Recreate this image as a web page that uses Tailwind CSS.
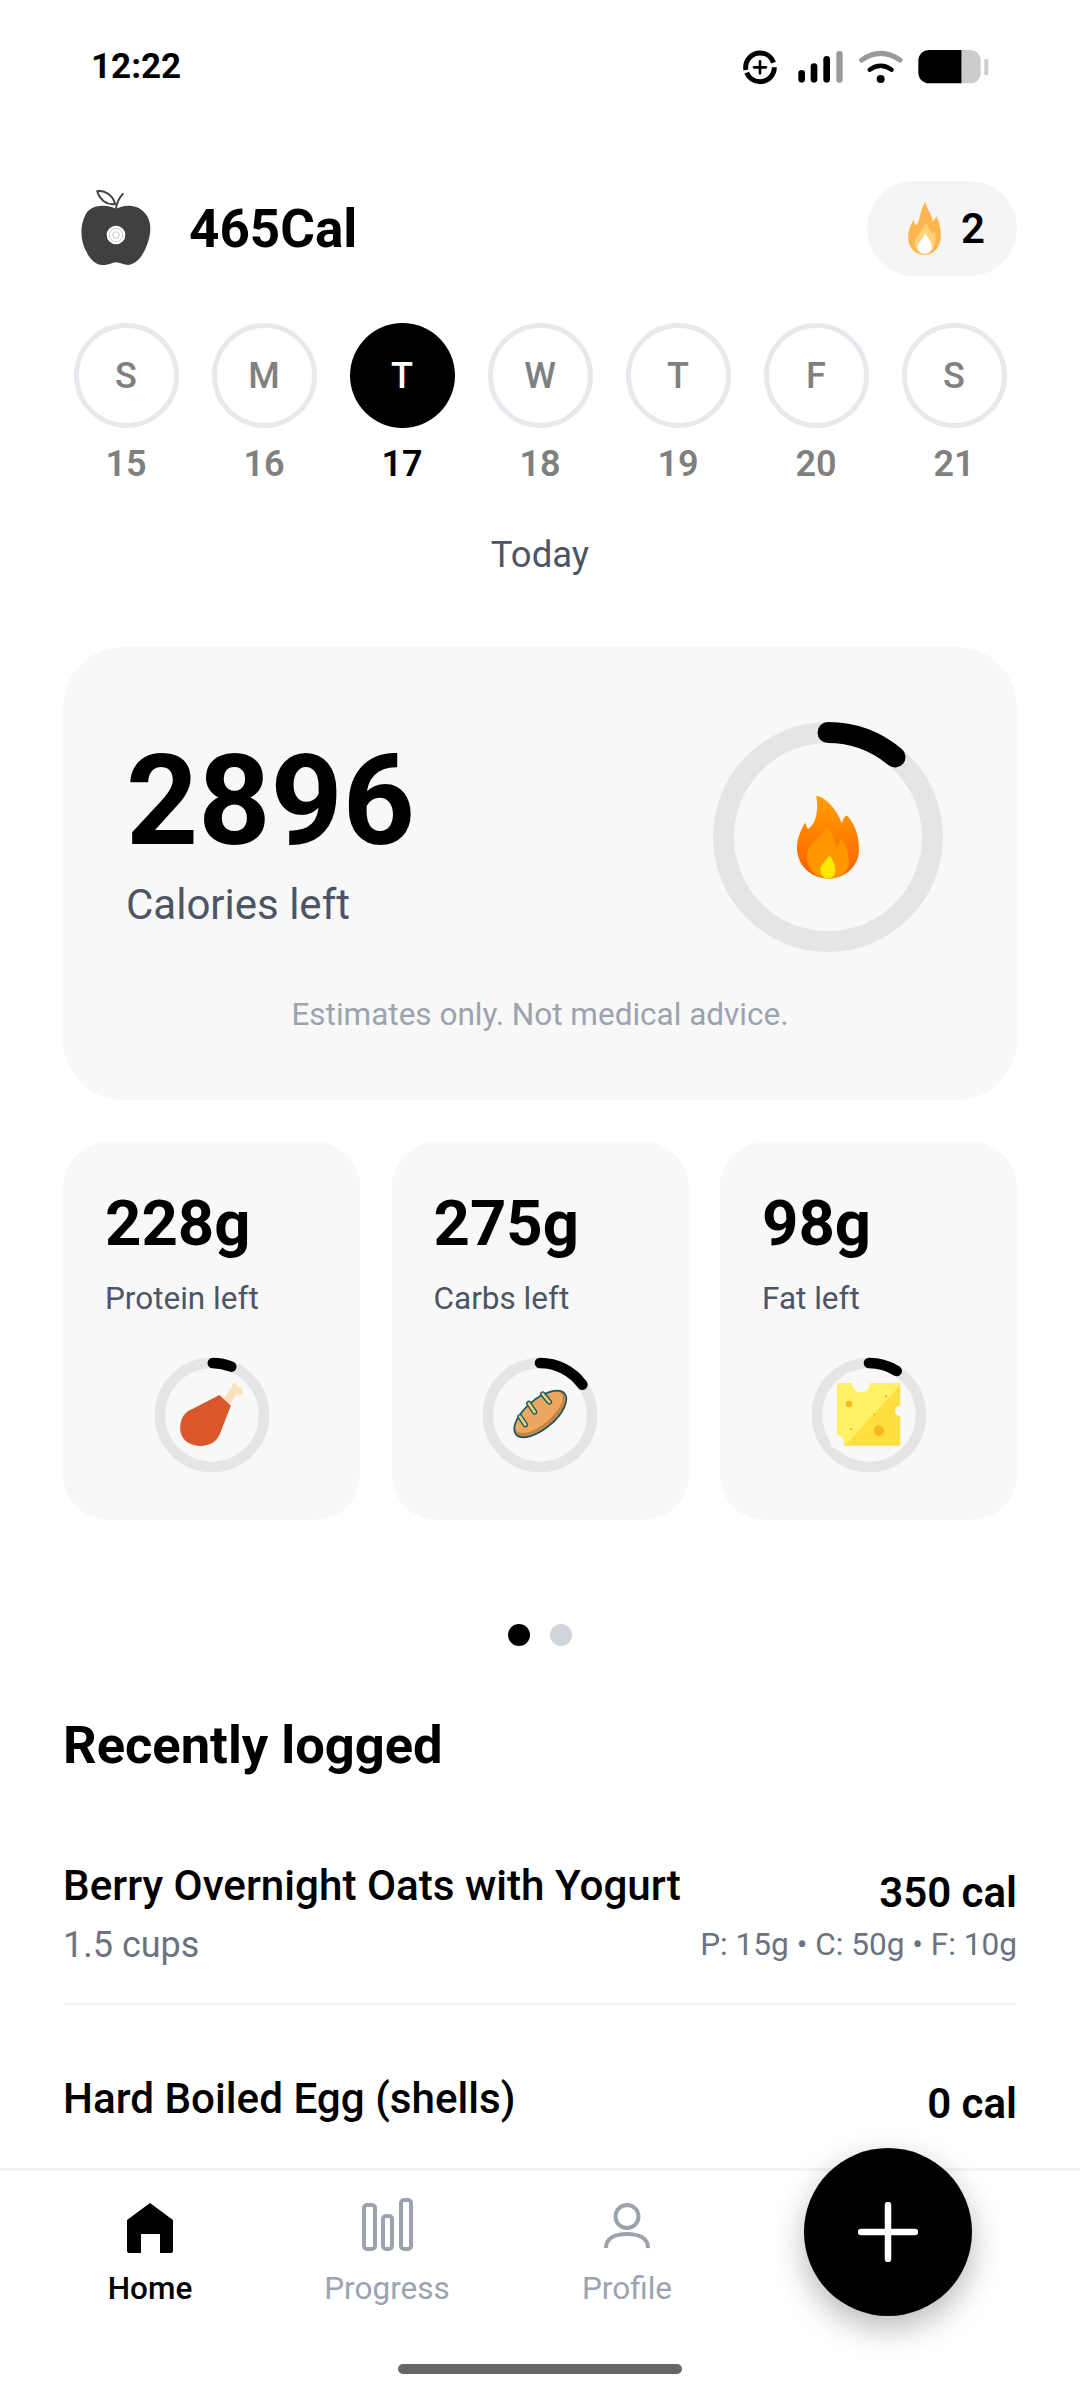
<!doctype html>
<html>
<head>
<meta charset="utf-8">
<script src="https://cdn.jsdelivr.net/npm/@tailwindcss/browser@4"></script>
</head>
<body>
<div class="relative flex h-[2400px] w-[1080px] flex-col overflow-hidden bg-white font-['Roboto',sans-serif] text-black">
  <main class="h-[2168px] overflow-hidden">
    <!-- status bar -->
    <div class="flex items-start justify-between pt-[40px] pl-[91px] pr-[60px]">
      <span class="mt-[2px] text-[35px] font-bold leading-[50px]">12:22</span>
      <svg width="300" height="60" viewBox="0 0 900 180">
        <circle cx="120" cy="82" r="43" fill="none" stroke="#000" stroke-width="15" stroke-dasharray="118 8 128 16"/>
        <path d="M120 64v36M102 82h36" stroke="#000" stroke-width="8" stroke-linecap="round"/>
        <rect x="235" y="90" width="20" height="38" rx="10"/>
        <rect x="272" y="70" width="20" height="58" rx="10"/>
        <rect x="310" y="48" width="20" height="80" rx="10"/>
        <rect x="349" y="33" width="19" height="95" rx="9" fill="#999"/>
        <path d="M425 60Q482 20 540 60" fill="none" stroke="#999" stroke-width="15" stroke-linecap="round"/>
        <path d="M449 89Q482 65 515 89" fill="none" stroke="#000" stroke-width="13" stroke-linecap="round"/>
        <circle cx="482" cy="117" r="12"/>
        <path d="M725 30H627A32 32 0 0 0 595 62V98A32 32 0 0 0 627 130H725Z"/>
        <path d="M725 30H752A30 30 0 0 1 782 60V100A30 30 0 0 1 752 130H725Z" fill="#ccc"/>
        <rect x="793" y="58" width="12" height="47" rx="3" fill="#ccc"/>
      </svg>
    </div>

    <!-- header -->
    <div class="mt-[81px] flex h-[95px] items-center justify-between pl-[80px] pr-[63px]">
      <div class="flex items-center gap-[34px]">
        <svg width="75" height="80" viewBox="120 85 225 240">
          <path d="M228 145C200 130 150 130 135 165C120 195 120 240 140 275C155 305 175 315 195 313C210 312 220 305 228 305C240 305 250 313 265 313C290 310 310 285 322 250C335 215 335 180 315 158C295 130 250 130 228 145Z" fill="#404040"/>
          <path d="M228 145C230 125 238 110 250 98" fill="none" stroke="#404040" stroke-width="6"/>
          <path d="M172 92C195 88 220 105 225 130C200 135 178 115 172 92Z" fill="none" stroke="#404040" stroke-width="6"/>
          <circle cx="228" cy="223" r="28" fill="#fff"/>
          <circle cx="228" cy="223" r="20" fill="none" stroke="#999" stroke-width="1.5"/>
          <circle cx="228" cy="223" r="10" fill="none" stroke="#999" stroke-width="1.5"/>
        </svg>
        <span class="text-[53px] font-bold leading-[60px]">465Cal</span>
      </div>
      <div class="flex h-[95px] w-[150px] items-center gap-[20px] rounded-full bg-[#f5f5f5] pl-[41px]">
        <svg width="33" height="53" viewBox="0 0 99 160">
          <path d="M52 0C58 25 72 35 74 58C80 52 84 48 85 42C95 60 99 80 99 102C99 135 78 160 50 160C22 160 0 138 0 106C0 85 8 72 16 52C18 62 21 68 26 70C38 50 36 22 52 0Z" fill="#fdb64e"/>
          <path d="M54 62C60 78 70 84 72 98C76 92 78 88 79 84C85 100 84 125 76 140C68 152 58 156 48 156C32 155 20 140 20 122C22 100 44 88 54 62Z" fill="#ffd27a"/>
          <path d="M52 92C56 106 72 118 72 134C72 148 62 156 50 156C38 156 28 146 28 134C30 122 46 112 52 92Z" fill="#fff"/>
        </svg>
        <span class="text-[42px] font-semibold leading-[50px]">2</span>
      </div>
    </div>

    <!-- days -->
    <div class="mt-[47px] flex pl-[57px]">
      <div class="flex w-[138px] flex-col items-center">
        <div class="flex h-[105px] w-[105px] items-center justify-center rounded-full border-[5px] border-[#e8e9ec] text-[36px] font-medium text-[#808080]">S</div>
        <div class="mt-[14px] text-[36px] font-semibold leading-[44px] text-[#808080]">15</div>
      </div>
      <div class="flex w-[138px] flex-col items-center">
        <div class="flex h-[105px] w-[105px] items-center justify-center rounded-full border-[5px] border-[#e8e9ec] text-[36px] font-medium text-[#808080]">M</div>
        <div class="mt-[14px] text-[36px] font-semibold leading-[44px] text-[#808080]">16</div>
      </div>
      <div class="flex w-[138px] flex-col items-center">
        <div class="flex h-[105px] w-[105px] items-center justify-center rounded-full bg-black text-[36px] font-medium text-white">T</div>
        <div class="mt-[14px] text-[36px] font-semibold leading-[44px] text-black">17</div>
      </div>
      <div class="flex w-[138px] flex-col items-center">
        <div class="flex h-[105px] w-[105px] items-center justify-center rounded-full border-[5px] border-[#e8e9ec] text-[36px] font-medium text-[#808080]">W</div>
        <div class="mt-[14px] text-[36px] font-semibold leading-[44px] text-[#808080]">18</div>
      </div>
      <div class="flex w-[138px] flex-col items-center">
        <div class="flex h-[105px] w-[105px] items-center justify-center rounded-full border-[5px] border-[#e8e9ec] text-[36px] font-medium text-[#808080]">T</div>
        <div class="mt-[14px] text-[36px] font-semibold leading-[44px] text-[#808080]">19</div>
      </div>
      <div class="flex w-[138px] flex-col items-center">
        <div class="flex h-[105px] w-[105px] items-center justify-center rounded-full border-[5px] border-[#e8e9ec] text-[36px] font-medium text-[#808080]">F</div>
        <div class="mt-[14px] text-[36px] font-semibold leading-[44px] text-[#808080]">20</div>
      </div>
      <div class="flex w-[138px] flex-col items-center">
        <div class="flex h-[105px] w-[105px] items-center justify-center rounded-full border-[5px] border-[#e8e9ec] text-[36px] font-medium text-[#808080]">S</div>
        <div class="mt-[14px] text-[36px] font-semibold leading-[44px] text-[#808080]">21</div>
      </div>
    </div>
    <div class="mt-[47px] text-center text-[36.5px] leading-[44px] text-[#4b5563]">Today</div>

    <!-- calories card -->
    <div class="mx-[63px] mt-[70px] h-[453px] rounded-[60px] bg-[#f8f8f8] pt-[75px]">
      <div class="flex justify-between pl-[63px] pr-[74px]">
        <div class="pt-[14px]">
          <div class="text-[126px] font-bold leading-[130px]">2896</div>
          <div class="mt-[14px] text-[42px] leading-[50px] text-[#4b5563]">Calories left</div>
        </div>
        <svg width="230" height="230" viewBox="0 0 230 230">
          <circle cx="115" cy="115" r="104.5" fill="none" stroke="#e5e5e5" stroke-width="21"/>
          <path d="M115 10.5A104.5 104.5 0 0 1 182 35" fill="none" stroke="#000" stroke-width="21" stroke-linecap="round"/>
          <g transform="translate(84 73) scale(.3316)">
            <defs>
              <linearGradient id="fl" x1="0" y1="0" x2="0" y2="1">
                <stop offset="0" stop-color="#ffa000"/>
                <stop offset="1" stop-color="#ff5f00"/>
              </linearGradient>
            </defs>
            <path d="M62 2C85 8 120 40 135 85C140 70 145 62 150 62C175 85 187 125 187 165C187 215 145 252 95 252C40 252 0 210 0 160C0 130 12 105 25 82C30 100 33 105 37 100C60 80 65 40 58 5Z" fill="url(#fl)"/>
            <path d="M90 95C105 115 118 140 118 160C125 150 130 140 133 132C150 150 158 180 156 210C150 238 125 252 95 252C60 252 30 225 30 185C30 150 70 130 90 95Z" fill="#ff9800"/>
            <path d="M97 182C110 195 118 220 115 235C112 248 100 252 92 252C78 250 70 238 70 225C72 205 90 200 97 182Z" fill="#ffe800"/>
          </g>
        </svg>
      </div>
      <div class="mt-[43px] text-center text-[31.5px] leading-[40px] text-[#9ca3af]">Estimates only. Not medical advice.</div>
    </div>

    <!-- macro cards -->
    <div class="mx-[63px] mt-[42px] grid grid-cols-3 gap-[31.5px]">
      <div class="h-[378px] rounded-[45px] bg-[#f8f8f8] pt-[46px]">
        <div class="pl-[42px] text-[63.5px] font-bold leading-[72px]">228g</div>
        <div class="mt-[19px] pl-[42px] text-[31.5px] leading-[40px] text-[#4b5563]">Protein left</div>
        <svg class="mx-auto mt-[21px]" width="140" height="140" viewBox="5.5 0 420 420">
          <circle cx="215.5" cy="225" r="156" fill="none" stroke="#e5e5e5" stroke-width="32"/>
          <path d="M218 69A156 156 0 0 1 273 80" fill="none" stroke="#000" stroke-width="32" stroke-linecap="round"/>
          <path d="M250 178L276 140C272 130 288 124 291 138C300 138 314 152 304 164C298 168 292 164 288 164L268 196Z" fill="#fde0bd"/>
          <path d="M238 165L272 197L240 280C230 305 210 318 180 318C145 318 120 296 120 265C120 235 135 215 155 208Z" fill="#d9572b"/>
        </svg>
      </div>
      <div class="h-[378px] rounded-[45px] bg-[#f8f8f8] pt-[46px]">
        <div class="pl-[42px] text-[63.5px] font-bold leading-[72px]">275g</div>
        <div class="mt-[19px] pl-[42px] text-[31.5px] leading-[40px] text-[#4b5563]">Carbs left</div>
        <svg class="mx-auto mt-[21px]" width="140" height="140" viewBox="0 0 420 420">
          <circle cx="210" cy="225" r="156" fill="none" stroke="#e5e5e5" stroke-width="32"/>
          <path d="M210 69A156 156 0 0 1 337 134" fill="none" stroke="#000" stroke-width="32" stroke-linecap="round"/>
          <ellipse cx="211" cy="222" rx="95" ry="44" transform="rotate(-40 211 222)" fill="#c98442"/>
          <ellipse cx="207" cy="216" rx="88" ry="37" transform="rotate(-40 207 216)" fill="#eda85f"/>
          <ellipse cx="211" cy="222" rx="95" ry="44" transform="rotate(-40 211 222)" fill="none" stroke="#15586b" stroke-width="5"/>
          <path d="M218 162L238 186M176 190L194 216M150 230L166 254" stroke="#15586b" stroke-width="16" stroke-linecap="round"/>
          <path d="M218 162L238 186M176 190L194 216M150 230L166 254" stroke="#f2cf78" stroke-width="8" stroke-linecap="round"/>
        </svg>
      </div>
      <div class="h-[378px] rounded-[45px] bg-[#f8f8f8] pt-[46px]">
        <div class="pl-[42px] text-[63.5px] font-bold leading-[72px]">98g</div>
        <div class="mt-[19px] pl-[42px] text-[31.5px] leading-[40px] text-[#4b5563]">Fat left</div>
        <svg class="mx-auto mt-[21px]" width="140" height="140" viewBox="-3 0 420 420">
          <circle cx="207" cy="225" r="156" fill="none" stroke="#e5e5e5" stroke-width="32"/>
          <path d="M207 69A156 156 0 0 1 290 93" fill="none" stroke="#000" stroke-width="32" stroke-linecap="round"/>
          <rect x="111" y="129" width="190" height="188" fill="#ffdf3f"/>
          <path d="M111 129H301V135L135 317H111Z" fill="#fff066"/>
          <circle cx="183" cy="130" r="27" fill="#f8f8f8"/>
          <circle cx="301" cy="212" r="16" fill="#f8f8f8"/>
          <circle cx="111" cy="306" r="21" fill="#f8f8f8"/>
          <circle cx="147" cy="192" r="9.5" fill="#f5b81f"/>
          <circle cx="237" cy="272" r="16" fill="#f5b81f"/>
          <circle cx="258" cy="169" r="3.5" fill="#f5b81f"/>
          <circle cx="223" cy="223" r="3.5" fill="#f5b81f"/>
          <circle cx="153" cy="267" r="3.5" fill="#f5b81f"/>
        </svg>
      </div>
    </div>

    <!-- pager -->
    <div class="mt-[104px] flex justify-center gap-[20px]">
      <span class="h-[22px] w-[22px] rounded-full bg-black"></span>
      <span class="h-[22px] w-[22px] rounded-full bg-[#d1d5db]"></span>
    </div>

    <!-- recent -->
    <div class="mx-[63px]">
      <div class="mt-[69px] text-[52.5px] font-bold leading-[60px]">Recently logged</div>
      <div class="mt-[86px] flex justify-between">
        <div>
          <div class="text-[42.2px] font-medium leading-[50px]">Berry Overnight Oats with Yogurt</div>
          <div class="mt-[14px] text-[36px] leading-[40px] text-[#6b7280]">1.5 cups</div>
        </div>
        <div class="pt-[7px] text-right">
          <div class="text-[42px] font-semibold leading-[50px]">350 cal</div>
          <div class="mt-[7px] text-[31.6px] leading-[40px] text-[#6b7280]">P: 15g • C: 50g • F: 10g</div>
        </div>
      </div>
      <div class="mt-[38px] h-[2px] bg-[#f3f4f6]"></div>
      <div class="mt-[69px] flex justify-between">
        <div class="text-[42.2px] font-medium leading-[50px]">Hard Boiled Egg (shells)</div>
        <div class="pt-[5px] text-[42px] font-semibold leading-[50px]">0 cal</div>
      </div>
    </div>
  </main>

  <!-- bottom nav -->
  <nav class="h-[232px] border-t-[3px] border-[#f3f4f6] bg-white">
    <div class="flex pl-[32px] pt-[25px]">
      <div class="flex w-[236px] flex-col items-center">
        <svg width="60" height="60" viewBox="0 0 60 60"><path d="M30 7L53 24V55Q53 57 51 57H40V38H21V57H9Q7 57 7 55V24Z"/></svg>
        <span class="mt-[13px] text-[31.5px] font-medium leading-[40px] text-black">Home</span>
      </div>
      <div class="flex w-[238px] flex-col items-center">
        <svg width="60" height="60" viewBox="0 0 60 60" fill="none" stroke="#9ca3af" stroke-width="4">
          <rect x="7" y="9" width="11" height="44" rx="3"/>
          <rect x="26" y="20" width="9" height="33" rx="3"/>
          <rect x="44" y="4" width="10" height="49" rx="3"/>
        </svg>
        <span class="mt-[13px] text-[31.5px] leading-[40px] text-[#9ca3af]">Progress</span>
      </div>
      <div class="flex w-[242px] flex-col items-center">
        <svg width="60" height="60" viewBox="0 0 60 60" fill="none" stroke="#9ca3af" stroke-width="4">
          <circle cx="30" cy="20.5" r="11.5"/>
          <path d="M9 52C9 42 18 38 30 38C42 38 51 42 51 52"/>
        </svg>
        <span class="mt-[13px] text-[31.5px] leading-[40px] text-[#9ca3af]">Profile</span>
      </div>
    </div>
    <div class="mx-auto mt-[55px] h-[10px] w-[284px] rounded-full bg-[#666]"></div>
  </nav>

  <!-- floating action button -->
  <button class="absolute left-[804px] top-[2148px] flex h-[168px] w-[168px] items-center justify-center rounded-full bg-black shadow-[0_12px_32px_rgba(0,0,0,0.28)]">
    <svg width="60" height="60" viewBox="0 0 60 60"><path d="M30 3V57M3 30H57" stroke="#fff" stroke-width="6.5" stroke-linecap="round"/></svg>
  </button>
</div>
</body>
</html>
